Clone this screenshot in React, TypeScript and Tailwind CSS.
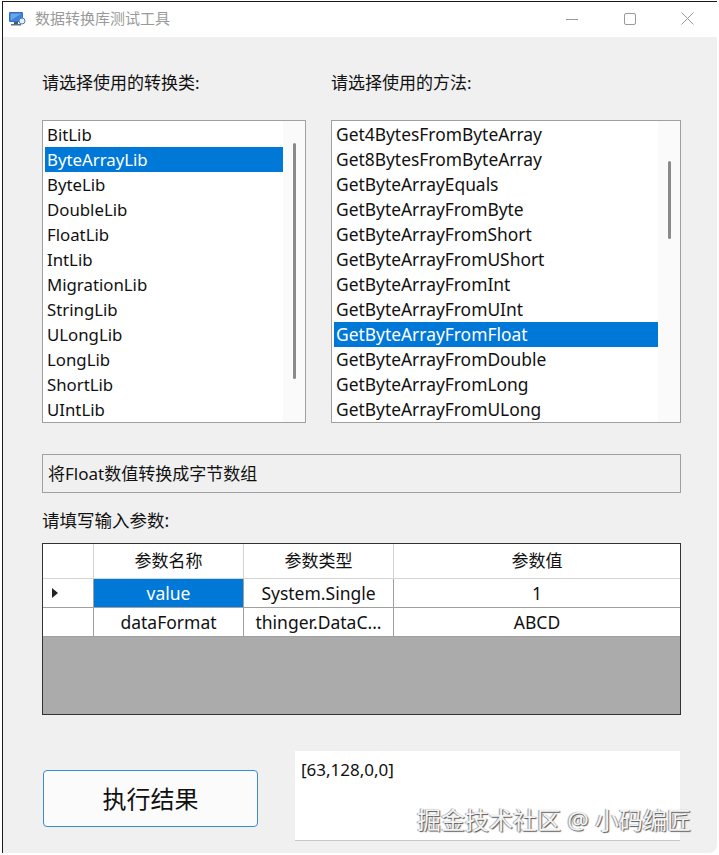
import React from "react";

const classes = [
  "BitLib",
  "ByteArrayLib",
  "ByteLib",
  "DoubleLib",
  "FloatLib",
  "IntLib",
  "MigrationLib",
  "StringLib",
  "ULongLib",
  "LongLib",
  "ShortLib",
  "UIntLib",
];

const methods = [
  "Get4BytesFromByteArray",
  "Get8BytesFromByteArray",
  "GetByteArrayEquals",
  "GetByteArrayFromByte",
  "GetByteArrayFromShort",
  "GetByteArrayFromUShort",
  "GetByteArrayFromInt",
  "GetByteArrayFromUInt",
  "GetByteArrayFromFloat",
  "GetByteArrayFromDouble",
  "GetByteArrayFromLong",
  "GetByteArrayFromULong",
];

const font = "font-['Noto_Sans','Noto_Sans_CJK_SC',sans-serif]";

interface ListProps {
  items: string[];
  selected: number;
  width: string;
  thumb: string;
  size: string;
}

function ListBox({ items, selected, width, thumb, size }: ListProps) {
  return (
    <div className={`flex h-[303px] ${width} border border-[#a0a0a0] bg-white`}>
      <div className="flex-1 pl-[2px] pt-[1px]">
        {items.map((item, i) => (
          <div
            key={item}
            className={`h-[25px] whitespace-nowrap pl-[2px] leading-[25px] ${size} ${
              i === selected ? "bg-[#0078d7] text-white" : "text-[#111]"
            }`}
          >
            {item}
          </div>
        ))}
      </div>
      {/* scrollbar */}
      <div className="flex w-[22px] justify-center bg-[#fafafa]">
        <div className={`w-[3px] rounded-full bg-[#8a8a8a] ${thumb}`} />
      </div>
    </div>
  );
}

function WindowIcon() {
  return (
    <svg width="18" height="17" viewBox="0 0 18 17">
      <rect x="1" y="2" width="14" height="10" rx="1" fill="#2f6fc6" />
      <rect x="2.5" y="3.5" width="11" height="7" fill="#6aa6ea" />
      <path d="M2.5 10.5 L13.5 3.5 L13.5 10.5 Z" fill="#3b82d8" />
      <rect x="6" y="12" width="4" height="2" fill="#4a5a70" />
      <rect x="3" y="14" width="10" height="1.5" fill="#5f6f86" />
      <circle cx="14" cy="11" r="3" fill="#e8eef7" stroke="#4d7cc0" strokeWidth="1" />
    </svg>
  );
}

export default function App() {
  return (
    <div className={`h-[855px] w-[719px] bg-white pl-[2px] pt-[1px] ${font}`}>
      <div className="relative flex h-[852px] w-[715px] flex-col overflow-hidden rounded-br-[8px] border-l border-t border-[#1a1a1a]">
        {/* Title bar */}
        <div className="flex h-[35px] items-start bg-white pt-[7px]">
          <div className="ml-[5px] flex h-[19px] items-center">
            <WindowIcon />
          </div>
          <span className="ml-[9px] text-[15px] leading-[19px] text-[#9a9a9a]">数据转换库测试工具</span>
          <div className="ml-auto flex h-[19px] items-center">
            <div className="flex w-[58px] justify-center">
              <svg width="12" height="12" viewBox="0 0 12 12">
                <line x1="0" y1="6.5" x2="12" y2="6.5" stroke="#9a9a9a" strokeWidth="1" />
              </svg>
            </div>
            <div className="flex w-[58px] justify-center">
              <svg width="12" height="12" viewBox="0 0 12 12">
                <rect x="0.5" y="0.5" width="11" height="11" rx="1.5" fill="none" stroke="#9a9a9a" strokeWidth="1" />
              </svg>
            </div>
            <div className="flex w-[58px] justify-center pr-[2px]">
              <svg width="13" height="13" viewBox="0 0 13 13">
                <path d="M0.5 0.5 L12.5 12.5 M12.5 0.5 L0.5 12.5" stroke="#9a9a9a" strokeWidth="1" />
              </svg>
            </div>
          </div>
        </div>

        {/* Body */}
        <div className="flex flex-1 flex-col bg-[#f0f0f0] pl-[39px]">
          <div className="mt-[36px] flex h-[20px] items-center text-[17px] text-[#111]">
            <span className="w-[289px]">请选择使用的转换类:</span>
            <span>请选择使用的方法:</span>
          </div>

          <div className="mt-[27px] flex gap-[25px]">
            <ListBox items={classes} selected={1} width="w-[264px]" thumb="mt-[22px] h-[236px]" size="text-[16.8px]" />
            <ListBox items={methods} selected={8} width="w-[350px]" thumb="mt-[40px] h-[78px]" size="text-[17.4px]" />
          </div>

          <div className="mt-[31px] flex h-[39px] w-[639px] items-center border border-[#a0a0a0] bg-[#f0f0f0] pl-[5px] text-[17px] text-[#111]">
            将Float数值转换成字节数组
          </div>

          <div className="mt-[17px] flex h-[20px] items-center text-[17.5px] text-[#111]">
            请填写输入参数:
          </div>

          {/* Data grid */}
          <div className="mt-[13px] flex h-[172px] w-[639px] flex-col border border-[#333] bg-[#ababab]">
            <div className="flex h-[35px] border-b border-[#d4d4d4] bg-white text-[17px] text-[#111]">
              <div className="w-[51px] border-r border-[#d4d4d4]" />
              <div className="flex w-[150px] items-center justify-center border-r border-[#d4d4d4]">参数名称</div>
              <div className="flex w-[150px] items-center justify-center border-r border-[#d4d4d4]">参数类型</div>
              <div className="flex flex-1 items-center justify-center">参数值</div>
            </div>
            <div className="flex h-[29px] border-b border-[#a0a0a0] bg-white text-[17.5px] text-[#111]">
              <div className="flex w-[51px] items-center border-r border-[#a0a0a0] pl-[9px]">
                <svg width="6" height="10" viewBox="0 0 6 10">
                  <path d="M0 0 L6 5 L0 10 Z" fill="#222" />
                </svg>
              </div>
              <div className="flex w-[150px] items-center justify-center border-r border-[#a0a0a0] bg-[#0078d7] text-white">value</div>
              <div className="flex w-[150px] items-center justify-center border-r border-[#a0a0a0]">System.Single</div>
              <div className="flex flex-1 items-center justify-center">1</div>
            </div>
            <div className="flex h-[29px] border-b border-[#a0a0a0] bg-white text-[17.5px] text-[#111]">
              <div className="w-[51px] border-r border-[#a0a0a0]" />
              <div className="flex w-[150px] items-center justify-center border-r border-[#a0a0a0]">dataFormat</div>
              <div className="flex w-[150px] items-center justify-center whitespace-nowrap border-r border-[#a0a0a0]">thinger.DataC...</div>
              <div className="flex flex-1 items-center justify-center">ABCD</div>
            </div>
          </div>

          {/* Bottom */}
          <div className="mt-[36px] flex items-start gap-[37px]">
            <button className="mt-[19px] ml-[1px] flex h-[57px] w-[215px] items-center justify-center rounded-[4px] border border-[#3a8ad8] bg-[#fbfbfb] text-[24px] text-[#111]">
              执行结果
            </button>
            <div className="h-[90px] w-[385px] border-b border-[#c8c8c8] bg-white px-[6px] pt-[6px] text-[17px] text-[#111]">
              [63,128,0,0]
            </div>
          </div>
        </div>

        {/* watermark */}
        <div className="absolute left-[414px] top-[800px] whitespace-nowrap text-[24px] text-[#f4f4f4] [text-shadow:1px_1px_1px_#555,-1px_0_1px_#999]">
          掘金技术社区 @ 小码编匠
        </div>
      </div>
    </div>
  );
}
